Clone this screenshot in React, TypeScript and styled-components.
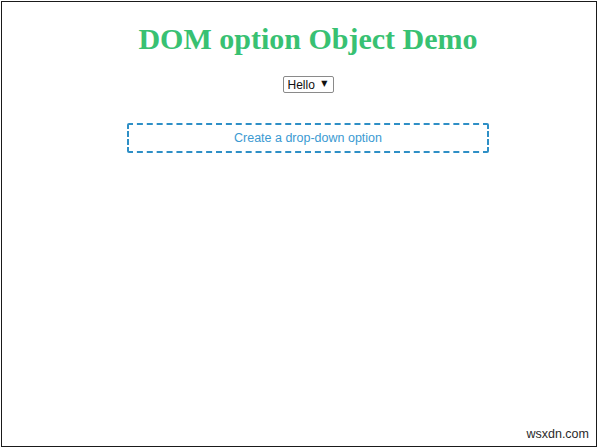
import React from 'react';
import styled, { createGlobalStyle } from 'styled-components';

const GlobalStyle = createGlobalStyle`
  html, body {
    margin: 0;
    padding: 0;
    background: #fff;
  }
`;

const Frame = styled.div`
  box-sizing: border-box;
  width: 596px;
  height: 446px;
  margin: 1px 0 0 1px;
  border: 1.5px solid #1a1a1a;
  display: flex;
  flex-direction: column;
  align-items: center;
  padding-left: 18px;
  position: relative;
`;

const Title = styled.h1`
  margin: 19px 0 0;
  font-family: 'Liberation Serif', 'Times New Roman', serif;
  font-size: 30px;
  font-weight: bold;
  color: #38c172;
  line-height: 36px;
`;

const SelectWrap = styled.div`
  position: relative;
  margin-top: 19px;

  &::after {
    content: '▼';
    position: absolute;
    right: 6px;
    top: 3px;
    font-family: 'DejaVu Sans', sans-serif;
    font-size: 8px;
    color: #111;
    pointer-events: none;
  }
`;

const Select = styled.select`
  appearance: none;
  -webkit-appearance: none;
  display: block;
  box-sizing: border-box;
  width: 51px;
  height: 17px;
  padding: 0 0 0 4px;
  font-family: 'Liberation Sans', Arial, sans-serif;
  font-size: 12px;
  color: #111;
  border: 1px solid #8a8a8a;
  border-radius: 2px;
  background: #fff;
`;

const OptionButton = styled.button`
  margin-top: 30px;
  width: 362px;
  height: 30px;
  box-sizing: border-box;
  border: 2px dashed #2e8fc6;
  border-radius: 2px;
  background: #fff;
  color: #3b9ad2;
  font-family: 'Liberation Sans', Arial, sans-serif;
  font-size: 12.5px;
  cursor: pointer;
`;

const Watermark = styled.span`
  position: absolute;
  right: 7px;
  bottom: 5px;
  font-family: 'Liberation Sans', Arial, sans-serif;
  font-size: 12.5px;
  color: #2a2a2a;
`;

export default function App() {
  return (
    <>
      <GlobalStyle />
      <Frame>
        <Title>DOM option Object Demo</Title>
        <SelectWrap>
          <Select defaultValue="Hello">
            <option value="Hello">Hello</option>
          </Select>
        </SelectWrap>
        <OptionButton type="button">Create a drop-down option</OptionButton>
        <Watermark>wsxdn.com</Watermark>
      </Frame>
    </>
  );
}
